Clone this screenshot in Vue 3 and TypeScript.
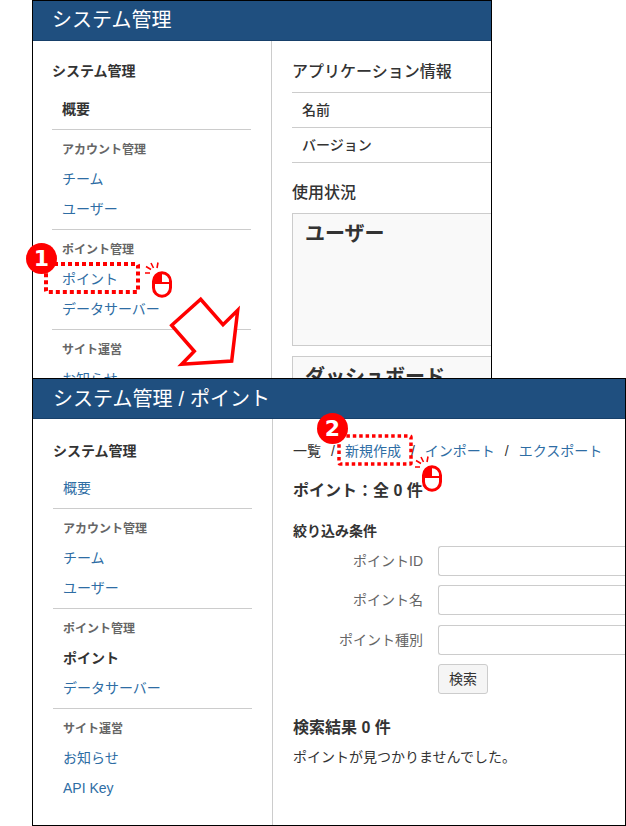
<script setup lang="ts">
interface NavItem { label: string; active?: boolean }
interface NavGroup { title?: string; items: NavItem[] }

const nav1: NavGroup[] = [
  { items: [{ label: '概要', active: true }] },
  { title: 'アカウント管理', items: [{ label: 'チーム' }, { label: 'ユーザー' }] },
  { title: 'ポイント管理', items: [{ label: 'ポイント' }, { label: 'データサーバー' }] },
  { title: 'サイト運営', items: [{ label: 'お知らせ' }] },
]
const nav2: NavGroup[] = [
  { items: [{ label: '概要' }] },
  { title: 'アカウント管理', items: [{ label: 'チーム' }, { label: 'ユーザー' }] },
  { title: 'ポイント管理', items: [{ label: 'ポイント', active: true }, { label: 'データサーバー' }] },
  { title: 'サイト運営', items: [{ label: 'お知らせ' }, { label: 'API Key' }] },
]
const fields = ['ポイントID', 'ポイント名', 'ポイント種別']
const mice = ['mouse-1', 'mouse-2']
</script>

<template>
  <div class="canvas">
    <section class="win win-a">
      <header class="bar">システム管理</header>
      <div class="body">
        <aside class="side">
          <h3 class="side-title">システム管理</h3>
          <div v-for="(g, i) in nav1" :key="i" class="group">
            <div v-if="g.title" class="group-title">{{ g.title }}</div>
            <div v-for="n in g.items" :key="n.label" class="nav" :class="{ active: n.active }">{{ n.label }}</div>
          </div>
        </aside>
        <main class="main-a">
          <h2 class="h-a">アプリケーション情報</h2>
          <div class="rows">
            <div class="row">名前</div>
            <div class="row">バージョン</div>
          </div>
          <h2 class="h-b">使用状況</h2>
          <div class="panel panel-1">ユーザー</div>
          <div class="panel panel-2">ダッシュボード</div>
        </main>
      </div>
    </section>

    <section class="win win-b">
      <header class="bar">システム管理 / ポイント</header>
      <div class="body">
        <aside class="side">
          <h3 class="side-title">システム管理</h3>
          <div v-for="(g, i) in nav2" :key="i" class="group">
            <div v-if="g.title" class="group-title">{{ g.title }}</div>
            <div v-for="n in g.items" :key="n.label" class="nav" :class="{ active: n.active }">{{ n.label }}</div>
          </div>
        </aside>
        <main class="main-b">
          <div class="crumbs">
            <span class="cur">一覧</span><span class="sep">/</span><a>新規作成</a><span class="sep">/</span><a>インポート</a><span class="sep">/</span><a>エクスポート</a>
          </div>
          <h2 class="count">ポイント：全 0 件</h2>
          <h3 class="filter">絞り込み条件</h3>
          <div v-for="f in fields" :key="f" class="field">
            <label>{{ f }}</label>
            <div class="input"></div>
          </div>
          <div class="btn">検索</div>
          <h2 class="result">検索結果 0 件</h2>
          <p class="none">ポイントが見つかりませんでした。</p>
        </main>
      </div>
    </section>

    <!-- annotations -->
    <svg class="dots dots-1" width="96" height="32" viewBox="0 0 96 32">
      <rect x="2" y="2" width="92" height="28" rx="1" fill="none" stroke="#f00" stroke-width="4" stroke-dasharray="4 3" />
    </svg>
    <svg class="dots dots-2" width="76" height="32" viewBox="0 0 76 32">
      <rect x="2" y="2" width="72" height="28" rx="1" fill="none" stroke="#f00" stroke-width="3.5" stroke-dasharray="3.5 2.9" />
    </svg>
    <div class="badge badge-1">1</div>
    <div class="badge badge-2">2</div>

    <svg v-for="m in mice" :key="m" class="mouse" :class="m" width="40" height="44" viewBox="0 0 40 44">
      <path d="M5 15 L10 15 M6 8.5 L11 11.5 M11 5 L13.5 10 M18 4.5 L17 10" fill="none" stroke="#f00" stroke-width="1.6" />
      <rect x="13.5" y="14.7" width="17" height="23.6" rx="8.5" fill="#fff" stroke="#f00" stroke-width="3" />
      <path d="M22 14.7 A8.5 8.5 0 0 0 13.5 23.2 L13.5 25 L22 25 Z" fill="#f00" />
      <path d="M13.5 25 L30.5 25" stroke="#f00" stroke-width="2" />
    </svg>

    <svg class="arrow" width="80" height="78" viewBox="0 0 80 78">
      <path d="M6.7 33.3 L35.7 7.3 L58 32.7 L72.7 18.3 L66.7 69 L16.7 72.3 L29.3 59.3 Z" fill="#fff" stroke="#f00" stroke-width="3.5" stroke-linejoin="miter" />
    </svg>
  </div>
</template>

<style>
html, body { margin: 0; background: #fff; }
</style>

<style scoped>
.canvas {
  position: relative;
  width: 626px;
  height: 826px;
  overflow: hidden;
  background: #fff;
  font-family: "Liberation Sans", "Noto Sans CJK JP", sans-serif;
  font-size: 14px;
  color: #333;
}
.win {
  position: absolute;
  box-sizing: border-box;
  overflow: hidden;
  background: #fff;
  border: 1px solid #000;
}
.win-a { left: 32px; top: 0; width: 460px; height: 379px; }
.win-b { left: 32px; top: 378px; width: 594px; height: 448px; }
.bar {
  height: 40px;
  box-sizing: border-box;
  background: #1f4f7f;
  border-bottom: 1px solid #17406a;
  color: #fff;
  font-size: 20px;
}
.win-a .bar { padding-left: 19px; line-height: 39px; }
.win-b .bar { padding-left: 20px; line-height: 40px; word-spacing: 0.5px; }
.body { display: flex; height: 100%; }
.side {
  flex: none;
  box-sizing: border-box;
  border-right: 1px solid #ccc;
}
.win-a .side { width: 239px; padding: 19px 20px 0 19px; }
.win-b .side { width: 240px; padding: 21px 20px 0 20px; }
.side-title {
  font-size: 14px;
  line-height: 22px;
  font-weight: 600;
}
.win-a .side-title { margin: 0 0 12px; }
.win-b .side-title { margin: 0 0 11px; }
.group { border-bottom: 1px solid #ccc; padding-bottom: 5px; margin-bottom: 10px; }
.group:last-child { border-bottom: 0; }
.group-title {
  font-size: 12px;
  font-weight: 600;
  line-height: 20px;
  margin-bottom: 4px;
  color: #666;
  padding-left: 10px;
}
.nav {
  height: 30px;
  line-height: 30px;
  padding-left: 10px;
  color: #2e6da4;
}
.nav.active { color: #333; font-weight: 700; }
.main-a, .main-b { flex: 1; min-width: 0; padding-left: 20px; }
.main-a { padding-top: 19px; }
.h-a, .h-b { font-size: 16px; font-weight: 500; line-height: 24px; }
.h-a { margin: 0 0 8px; }
.rows { border-bottom: 1px solid #ccc; }
.row {
  height: 34px;
  line-height: 34px;
  padding-left: 10px;
  border-top: 1px solid #ccc;
  font-weight: 500;
}
.h-b { margin: 18px 0 8px; }
.panel {
  box-sizing: border-box;
  padding: 6px 12px;
  background: #f9f9f9;
  border: 1px solid #ccc;
  border-right: 0;
  font-size: 20px;
  font-weight: 700;
  line-height: 28px;
}
.panel-1 { height: 133px; margin-bottom: 10px; }
.panel-2 { height: 60px; }
.main-b { padding-top: 22px; }
.crumbs { height: 20px; line-height: 20px; white-space: nowrap; }
.crumbs a { color: #2e6da4; }
.sep { margin: 0 10px; }
.count { margin: 18px 0 0; font-size: 16px; line-height: 24px; font-weight: 600; }
.filter { margin: 18px 0 5px; font-size: 14px; line-height: 20px; font-weight: 600; }
.field { display: flex; align-items: center; height: 30px; margin-bottom: 9.4px; }
.field label { width: 130px; margin-bottom: 2px; text-align: right; color: #666; }
.input {
  margin-left: 15px;
  flex: 1;
  height: 30px;
  box-sizing: border-box;
  border: 1px solid #ccc;
  border-right: 0;
  border-radius: 3px 0 0 3px;
}
.btn {
  margin: 1.6px 0 0 145px;
  width: 50px;
  height: 30px;
  box-sizing: border-box;
  border: 1px solid #ccc;
  border-radius: 3px;
  background: #f5f5f5;
  text-align: center;
  line-height: 28px;
}
.result { margin: 22px 0 0; font-size: 16px; line-height: 24px; font-weight: 600; }
.none { margin: 7px 0 0; line-height: 20px; }
.dots { position: absolute; }
.dots-1 { left: 44px; top: 262px; }
.dots-2 { left: 337px; top: 434px; }
.badge {
  position: absolute;
  width: 31px;
  height: 31px;
  border-radius: 50%;
  background: #f00;
  color: #fff;
  font-family: "DejaVu Sans", sans-serif;
  font-size: 22px;
  font-weight: 700;
  line-height: 31px;
  text-align: center;
}
.badge-1 { left: 26px; top: 243px; }
.badge-2 { left: 317px; top: 413px; }
.mouse { position: absolute; }
.mouse-1 { left: 140px; top: 258px; }
.mouse-2 { left: 410px; top: 452px; }
.arrow { position: absolute; left: 165px; top: 292px; }
</style>
